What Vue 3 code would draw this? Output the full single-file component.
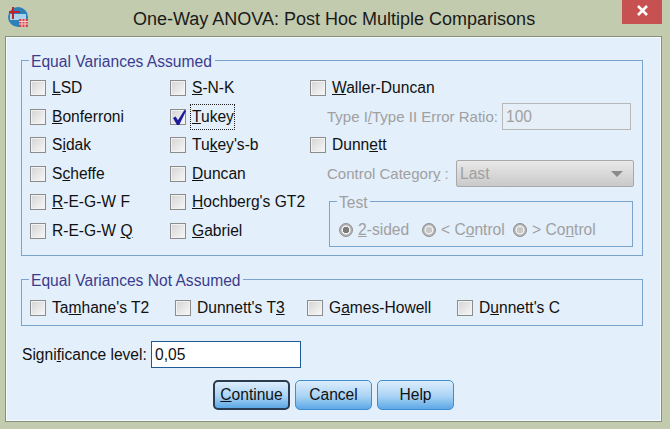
<template>
  <div class="dialog">
    <div class="titlebar">
      <svg class="app-icon" width="22" height="22" viewBox="0 0 22 22">
        <circle cx="11" cy="11" r="10" fill="#2f7fb8" />
        <path d="M3 8h16v6H3z" fill="#a9d3ea" />
        <path d="M2 6h11M6 1v12" stroke="#c4202c" stroke-width="2" fill="none" />
        <rect x="12" y="13" width="9" height="8" fill="#d8404a" />
        <path d="M12 15.5h9M12 18h9M15 13v8M18 13v8" stroke="#f6d0d0" stroke-width="1" />
      </svg>
      <div class="title">One-Way ANOVA: Post Hoc Multiple Comparisons</div>
      <div class="close">
        <svg width="13" height="11" viewBox="0 0 13 11">
          <path d="M2 1l9 9M11 1l-9 9" stroke="#fff" stroke-width="2.6" fill="none" />
        </svg>
      </div>
    </div>

    <div class="panel">
      <fieldset class="group assumed">
        <legend>Equal Variances Assumed</legend>
        <div class="assumed-body">
          <div class="col col-a">
            <label v-for="c in colA" :key="c.pre + c.key" class="check">
              <span class="box"></span>
              <span class="text">{{ c.pre }}<u>{{ c.key }}</u>{{ c.post }}</span>
            </label>
          </div>
          <div class="col col-b">
            <label v-for="c in colB" :key="c.pre + c.key" class="check">
              <span class="box">
                <svg v-if="c.checked" width="17" height="17" viewBox="0 0 17 17">
                  <path d="M2 9l2.6-1.6 2.3 3.8L13.4 1 15 2 8.2 16H6z" fill="#1c1c9c" />
                </svg>
              </span>
              <span class="text" :class="{ focused: c.checked }">{{ c.pre }}<u>{{ c.key }}</u>{{ c.post }}</span>
            </label>
          </div>
          <div class="col col-c">
            <label class="check">
              <span class="box"></span>
              <span class="text"><u>W</u>aller-Duncan</span>
            </label>
            <div class="field-row ratio-row">
              <span class="muted ratio-label">Type I<u>/</u>Type II Error Ratio:</span>
              <div class="ratio-input">100</div>
            </div>
            <label class="check">
              <span class="box"></span>
              <span class="text">Dunn<u>e</u>tt</span>
            </label>
            <div class="field-row category-row">
              <span class="muted category-label">Control Categor<u>y</u> :</span>
              <div class="select">
                <span>Last</span>
                <i class="caret"></i>
              </div>
            </div>
            <fieldset class="test">
              <legend>Test</legend>
              <div class="radios">
                <span class="radio-item first"><i class="radio on"></i><span><u>2</u>-sided</span></span>
                <span class="radio-item second"><i class="radio"></i><span>&lt; C<u>o</u>ntrol</span></span>
                <span class="radio-item"><i class="radio"></i><span>&gt; Co<u>n</u>trol</span></span>
              </div>
            </fieldset>
          </div>
        </div>
      </fieldset>

      <fieldset class="group not-assumed">
        <legend>Equal Variances Not Assumed</legend>
        <div class="not-body">
          <label v-for="c in notAssumed" :key="c.pre" class="check" :style="{ width: c.width + 'px' }">
            <span class="box"></span>
            <span class="text">{{ c.pre }}<u>{{ c.key }}</u>{{ c.post }}</span>
          </label>
        </div>
      </fieldset>

      <div class="sig-row">
        <span class="sig-label">Signi<u>f</u>icance level:</span>
        <div class="sig-input">0,05</div>
      </div>

      <div class="buttons">
        <button class="btn default"><u>C</u>ontinue</button>
        <button class="btn">Cancel</button>
        <button class="btn">Help</button>
      </div>
    </div>
  </div>
</template>

<script setup>
const colA = [
  { pre: '', key: 'L', post: 'SD' },
  { pre: '', key: 'B', post: 'onferroni' },
  { pre: 'S', key: 'i', post: 'dak' },
  { pre: 'S', key: 'c', post: 'heffe' },
  { pre: '', key: 'R', post: '-E-G-W F' },
  { pre: 'R-E-G-W ', key: 'Q', post: '' }
]

const colB = [
  { pre: '', key: 'S', post: '-N-K' },
  { pre: '', key: 'T', post: 'ukey', checked: true },
  { pre: 'Tu', key: 'k', post: "ey's-b" },
  { pre: '', key: 'D', post: 'uncan' },
  { pre: '', key: 'H', post: "ochberg's GT2" },
  { pre: '', key: 'G', post: 'abriel' }
]

const notAssumed = [
  { pre: 'Ta', key: 'm', post: "hane's T2", width: 145 },
  { pre: "Dunnett's T", key: '3', post: '', width: 132 },
  { pre: 'G', key: 'a', post: 'mes-Howell', width: 150 },
  { pre: 'D', key: 'u', post: "nnett's C", width: 130 }
]
</script>

<style>
html,
body {
  margin: 0;
  background: #c2cbae;
}
</style>

<style scoped>
.dialog {
  width: 670px;
  height: 429px;
  box-sizing: border-box;
  background: #c2cbae;
  font-family: "Liberation Sans", Arial, sans-serif;
  font-size: 15.6px;
  color: #111;
  overflow: hidden;
}

.titlebar {
  height: 36px;
  display: flex;
  position: relative;
  align-items: flex-start;
}

.app-icon {
  margin: 6px 0 0 7px;
}

.title {
  position: absolute;
  left: 133px;
  top: 9px;
  font-size: 18px;
  color: #1a1a1a;
  white-space: nowrap;
}

.close {
  position: absolute;
  left: 622px;
  top: 0;
  width: 40px;
  height: 24px;
  box-sizing: border-box;
  padding-bottom: 4px;
  background: #c75050;
  display: flex;
  align-items: center;
  justify-content: center;
}

.panel {
  margin-left: 5px;
  width: 657px;
  height: 386px;
  box-sizing: border-box;
  background: #e3effb;
  border: 1px solid #85917a;
  box-shadow: inset 0 0 0 1px #f6faff;
  padding: 13px 18px 0 15px;
}

.group {
  margin: 0;
  padding: 0;
  border: 1px solid #7ba4cd;
  min-width: 0;
  box-sizing: border-box;
}

.group > legend {
  margin-left: 7px;
  padding: 4px 3px 0 2px;
  color: #3c3c8c;
  line-height: 16px;
}

.assumed {
  height: 206px;
}

.assumed-body {
  display: flex;
  padding: 4px 0 0 8px;
}

.col {
  display: flex;
  flex-direction: column;
}

.col-a {
  width: 140px;
}

.col-b {
  width: 140px;
}

.col-c {
  flex: 1;
}

.check {
  height: 28.5px;
  display: flex;
  align-items: center;
  gap: 6px;
  flex: none;
}

.box {
  width: 14px;
  height: 14px;
  flex: none;
  position: relative;
  border: 1px solid #8c8c8c;
  background: linear-gradient(135deg, #d4d4d4, #f8f8f8);
  box-shadow: inset 0 0 0 1px #f2f2f2;
}

.box svg {
  position: absolute;
  left: 0;
  top: -1px;
}

.text {
  white-space: nowrap;
  position: relative;
}

.focused::after {
  content: "";
  position: absolute;
  inset: -4px -1px -4px -2px;
  border: 1px dotted #222;
}

.muted,
.test legend,
.radios {
  color: #a0a0a0;
}

.muted {
  font-size: 15px;
}

.field-row {
  height: 28.5px;
  display: flex;
  align-items: center;
  padding-left: 17px;
  flex: none;
}

.ratio-label {
  width: 175px;
  flex: none;
  white-space: nowrap;
}

.category-label {
  width: 129px;
  flex: none;
  white-space: nowrap;
}

.ratio-input {
  width: 129px;
  height: 27px;
  box-sizing: border-box;
  border: 1px solid #b8b8b8;
  background: #e6eff8;
  color: #a0a0a0;
  padding-left: 3px;
  display: flex;
  align-items: center;
}

.select {
  width: 178px;
  height: 27px;
  box-sizing: border-box;
  border: 1px solid #a9a9a9;
  border-radius: 2px;
  background: linear-gradient(#e9e9e9, #c9c9c9);
  color: #a0a0a0;
  padding: 0 10px 0 3px;
  display: flex;
  align-items: center;
  justify-content: space-between;
}

.caret {
  width: 0;
  height: 0;
  border-left: 6px solid transparent;
  border-right: 6px solid transparent;
  border-top: 6px solid #8a8a8a;
}

.test {
  margin: 3px 0 0 19px;
  padding: 0;
  width: 304px;
  box-sizing: border-box;
  height: 56px;
  border: 1px solid #7ba4cd;
  min-width: 0;
}

.test legend {
  margin-left: 7px;
  padding: 4px 2px 0;
  line-height: 16px;
}

.radios {
  display: flex;
  padding: 10px 0 0 9px;
}

.radio-item {
  display: flex;
  align-items: center;
  gap: 5px;
  white-space: nowrap;
}

.radio-item.first {
  width: 83px;
}

.radio-item.second {
  width: 91px;
}

.radio {
  width: 14px;
  height: 14px;
  flex: none;
  box-sizing: border-box;
  border-radius: 50%;
  border: 1px solid #8f8f8f;
  background: radial-gradient(circle, #c8c8c8 0 3px, #f0f0f0 3.5px 4px, #b4b4b4 5px);
}

.radio.on {
  background: radial-gradient(circle, #7c7c7c 0 3px, #f0f0f0 3.5px 4px, #b4b4b4 5px);
}

.not-assumed {
  margin-top: 13px;
  height: 57px;
}

.not-body {
  display: flex;
  padding: 5px 0 0 8px;
}

.sig-row {
  display: flex;
  align-items: center;
  margin: 15px 0 0 1px;
}

.sig-label {
  width: 129px;
  white-space: nowrap;
}

.sig-input {
  width: 150px;
  height: 27px;
  box-sizing: border-box;
  background: #fff;
  border: 1px solid #1f5a96;
  padding-left: 3px;
  display: flex;
  align-items: center;
}

.buttons {
  display: flex;
  gap: 5px;
  margin: 12px 0 0 192px;
}

.btn {
  width: 77px;
  height: 30px;
  padding: 0;
  border: 1px solid #3f8fd0;
  border-radius: 5px;
  background: linear-gradient(#dcedfb, #a9d3f5 55%, #5ca8e6);
  font-family: inherit;
  font-size: 15.6px;
  color: #111;
}

.btn.default {
  border: 2px solid #2a3c50;
}
</style>
